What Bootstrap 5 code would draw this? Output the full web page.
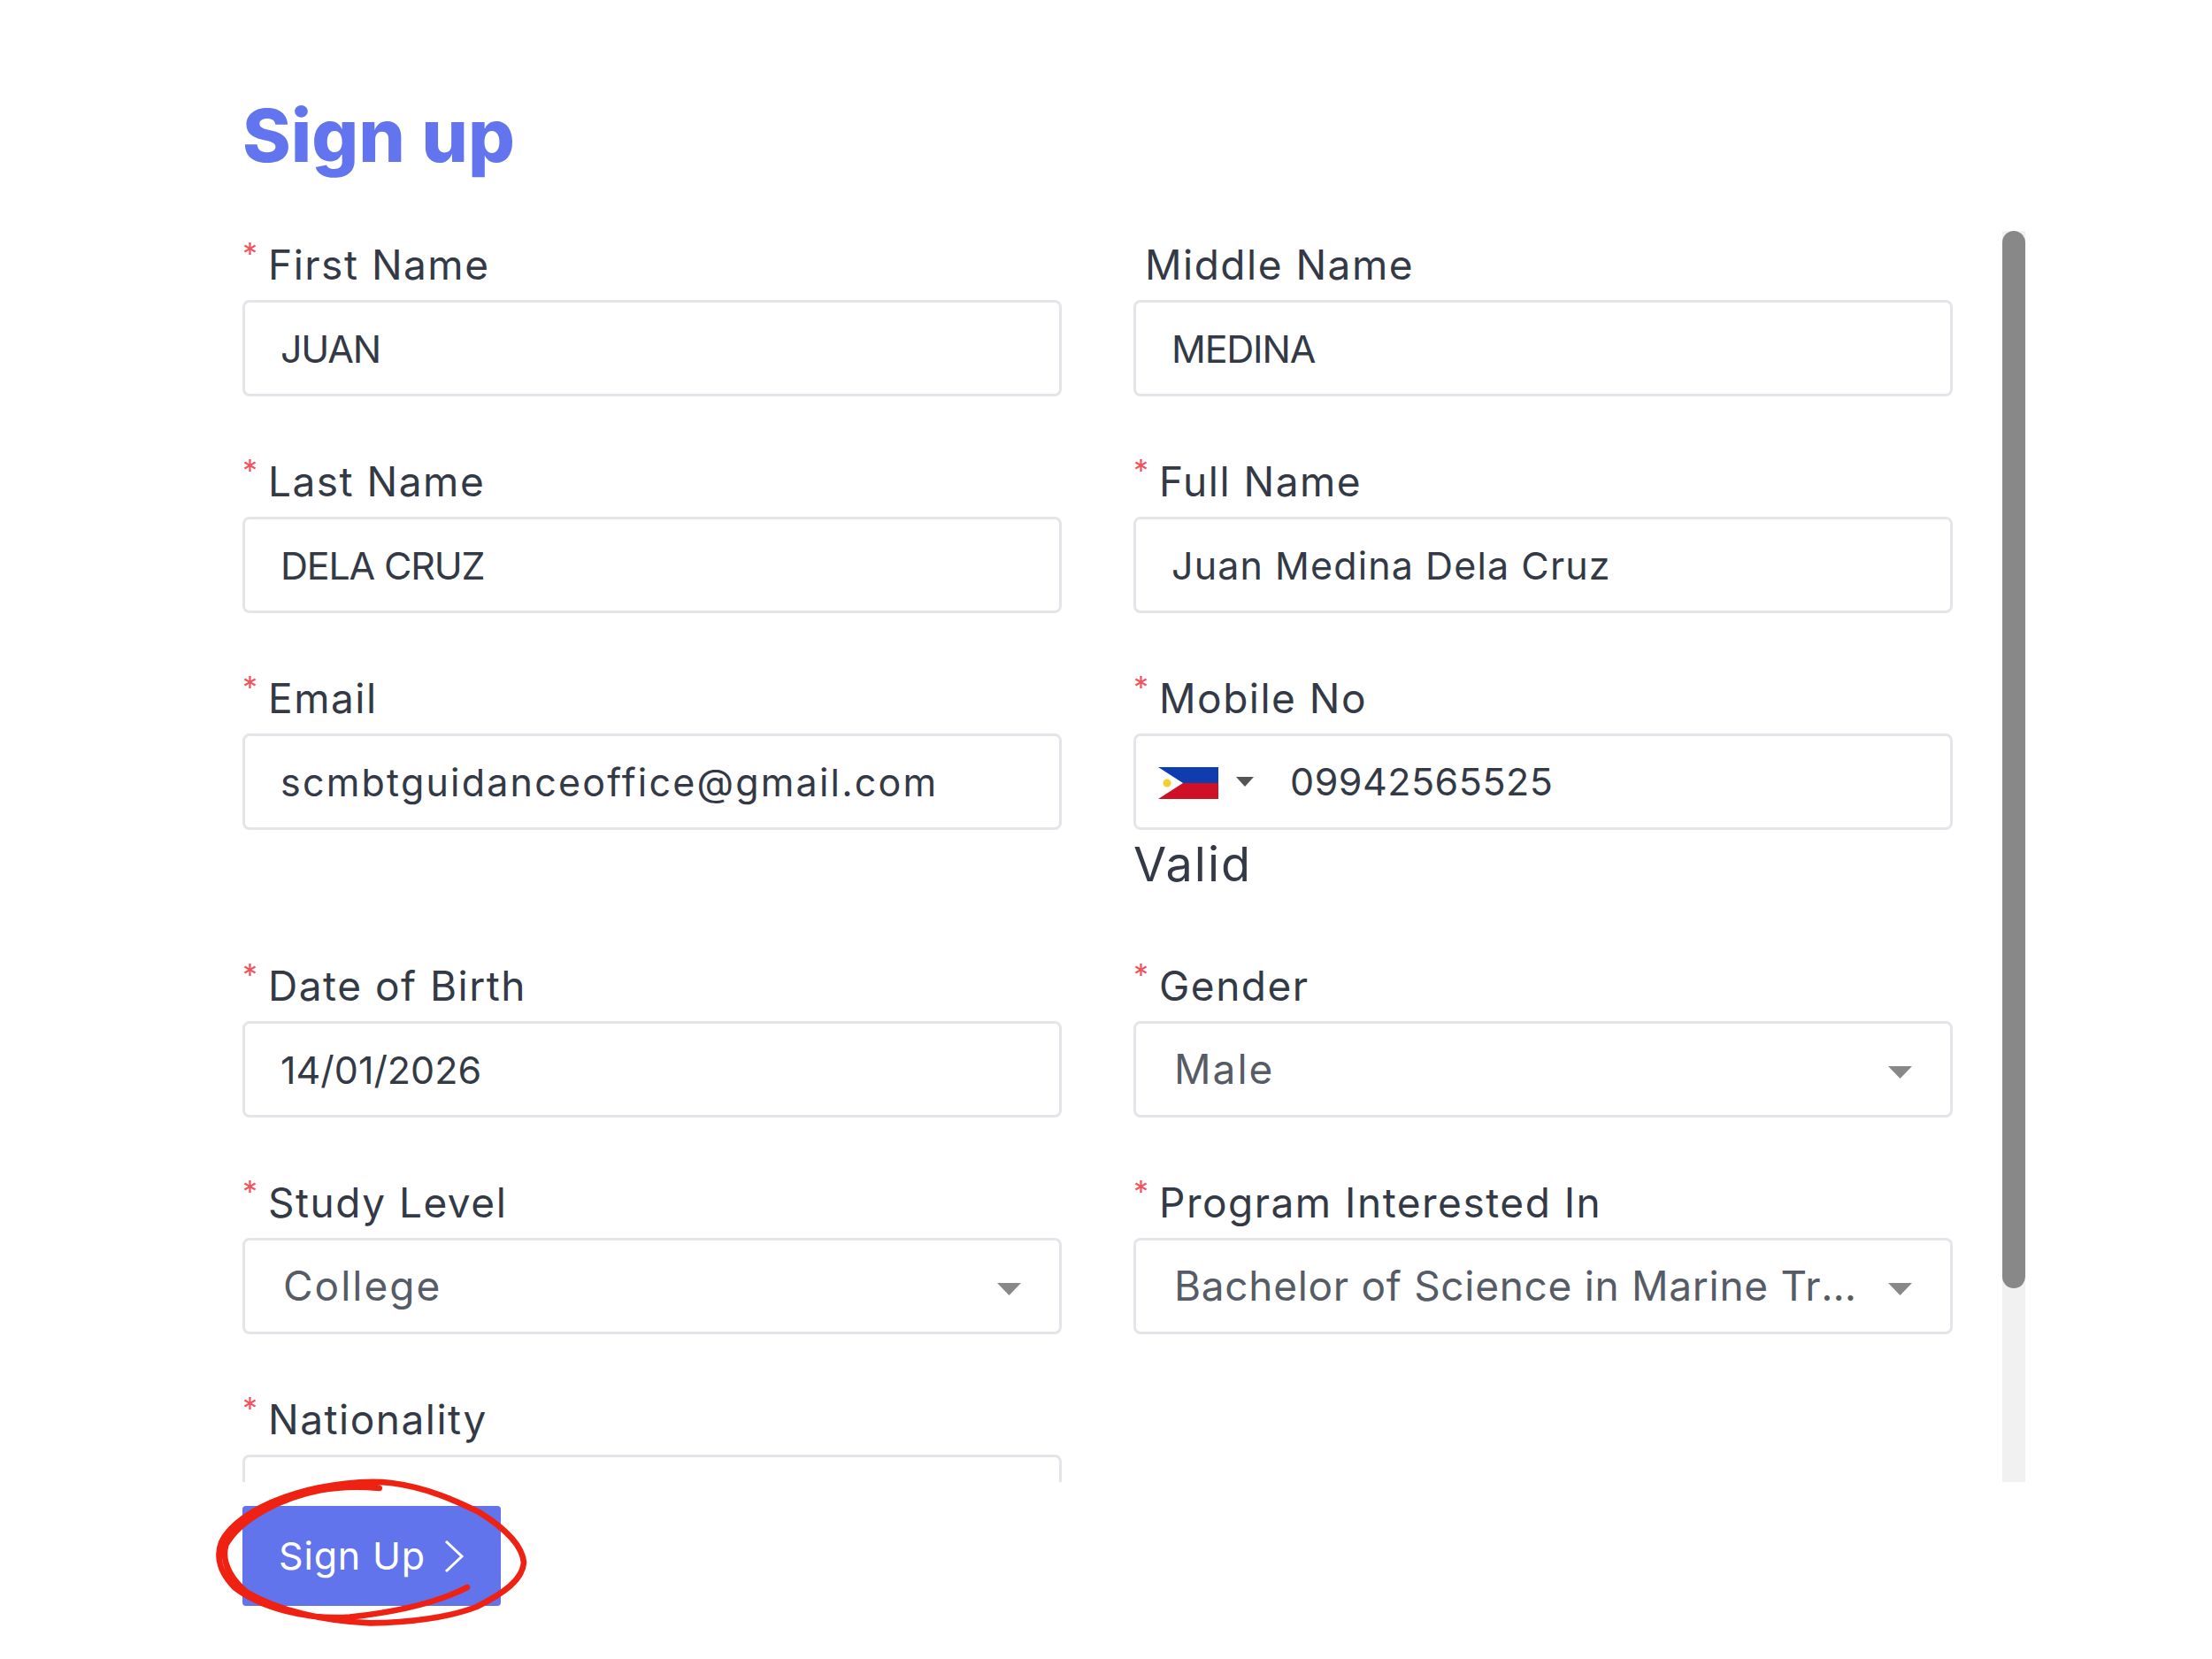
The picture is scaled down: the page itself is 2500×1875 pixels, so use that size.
<!doctype html>
<html lang="en">
<head>
<meta charset="utf-8">
<title>Sign up</title>
<link rel="stylesheet" href="https://cdn.jsdelivr.net/npm/bootstrap@5.3.0/dist/css/bootstrap.min.css">
<style>
body{background:#fff;font-family:Inter,"Liberation Sans",sans-serif;color:#333a46}
.page-wrap{padding:98px 0 0 274px;min-height:1875px}
.page-title{font-size:83px;line-height:110px;font-weight:800;color:#6274ee;margin:0 0 53px;letter-spacing:0}
.scroll-frame{width:2015px;gap:56px}
.scroll-area{width:1933px;height:1414px;overflow:hidden;flex:none}
.track{width:26px;flex:none;background:#f1f1f1}
.thumb{height:1195px;background:#888;border-radius:13px}
.form-grid{--bs-gutter-x:81px;--bs-gutter-y:0}
.field{height:245px}
.field-tall{height:325px}
.field-label{display:flex;height:78px;align-items:center;font-size:46px;letter-spacing:1.5px;line-height:1;margin:0;color:#333a46;padding-bottom:3px}
.field-label.plain{padding-left:13px}
.req{width:29px;flex:none;color:#f0545f;font-size:34px;line-height:1;align-self:flex-start;letter-spacing:0;padding-top:9px}
.field .form-control{height:109px;border:3px solid #e3e5e9;border-radius:8px;padding:0 40px;font-size:43px;color:#333a46;box-shadow:none}
.field .ls-caps{letter-spacing:-1.2px}
.field .ls-mixed{letter-spacing:1.1px}
.field .ls-email{letter-spacing:2.2px}
.sel .sel-text{flex:1;min-width:0;padding-left:3px;font-size:46px;letter-spacing:2px;color:#565c66}
.sel .ls-long{letter-spacing:.7px}
.sel svg{flex:none;margin-left:34px;margin-right:3px;margin-top:6px;width:27px;height:14px}
.field .tel{padding-left:25px}
.tel .flag{width:68px;height:36px;flex:none;margin-top:2px}
.tel .caret-tel{width:20px;height:11px;flex:none;margin:0 41px 0 20px}
.tel .tel-num{letter-spacing:.5px}
.valid-text{font-size:54px;letter-spacing:2px;line-height:78px;color:#333a46;margin:0}
.action-wrap{margin-top:27px;width:292px}
.signup-btn{width:292px;height:113px;background:#6274ec;border:0;border-radius:4px;color:#fff;font-size:43px;letter-spacing:.8px;padding:0;gap:20px}
.signup-btn svg{width:24px;height:38px}
.scribble{position:absolute;left:-52px;top:-146px;width:420px;height:315px;pointer-events:none}
</style>
</head>
<body>
<main class="page-wrap">
  <h1 class="page-title">Sign up</h1>
  <div class="scroll-frame d-flex">
    <div class="scroll-area">
      <form>
        <div class="row form-grid">
          <div class="col-6 field"><label class="field-label"><span class="req">*</span>First Name</label><input class="form-control ls-caps" value="JUAN"></div>
          <div class="col-6 field"><label class="field-label plain">Middle Name</label><input class="form-control ls-caps" value="MEDINA"></div>
          <div class="col-6 field"><label class="field-label"><span class="req">*</span>Last Name</label><input class="form-control ls-caps" value="DELA CRUZ"></div>
          <div class="col-6 field"><label class="field-label"><span class="req">*</span>Full Name</label><input class="form-control ls-mixed" value="Juan Medina Dela Cruz"></div>
          <div class="col-6 field field-tall"><label class="field-label"><span class="req">*</span>Email</label><input class="form-control ls-email" value="scmbtguidanceoffice@gmail.com"></div>
          <div class="col-6 field field-tall"><label class="field-label"><span class="req">*</span>Mobile No</label>
            <div class="form-control tel d-flex align-items-center">
              <svg class="flag" viewBox="0 0 68 36"><rect width="68" height="18" fill="#0f3cae"/><rect y="18" width="68" height="18" fill="#ce1126"/><path d="M0 0 28 18 0 36Z" fill="#fff"/><circle cx="10" cy="18" r="4.5" fill="#f4cf2e"/></svg>
              <svg class="caret-tel" viewBox="0 0 20 11"><path d="M0 0H20L10 11Z" fill="#555"/></svg>
              <span class="tel-num">09942565525</span>
            </div>
            <p class="valid-text">Valid</p>
          </div>
          <div class="col-6 field"><label class="field-label"><span class="req">*</span>Date of Birth</label><input class="form-control" value="14/01/2026"></div>
          <div class="col-6 field"><label class="field-label"><span class="req">*</span>Gender</label>
            <div class="form-control sel d-flex align-items-center"><span class="sel-text text-truncate">Male</span><svg viewBox="0 0 27 14"><path d="M0 0H27L13.5 14Z" fill="#888"/></svg></div></div>
          <div class="col-6 field"><label class="field-label"><span class="req">*</span>Study Level</label>
            <div class="form-control sel d-flex align-items-center"><span class="sel-text text-truncate">College</span><svg viewBox="0 0 27 14"><path d="M0 0H27L13.5 14Z" fill="#888"/></svg></div></div>
          <div class="col-6 field"><label class="field-label"><span class="req">*</span>Program Interested In</label>
            <div class="form-control sel d-flex align-items-center"><span class="sel-text ls-long text-truncate">Bachelor of Science in Marine Transportation</span><svg viewBox="0 0 27 14"><path d="M0 0H27L13.5 14Z" fill="#888"/></svg></div></div>
          <div class="col-6 field"><label class="field-label"><span class="req">*</span>Nationality</label><input class="form-control" value=""></div>
        </div>
      </form>
    </div>
    <div class="track"><div class="thumb"></div></div>
  </div>
  <div class="action-wrap position-relative">
    <button type="button" class="btn signup-btn d-flex align-items-center justify-content-center">Sign Up
      <svg viewBox="0 0 24 38"><path d="M3 2 21 19 3 36" fill="none" stroke="#fff" stroke-width="3"/></svg>
    </button>
    <svg class="scribble" viewBox="0 0 1260 945"><path d="M918 714C830 760 700 795 520 815C380 825 220 785 130 715C80 665 65 610 85 560C120 490 220 430 340 395C440 365 570 350 660 360C780 375 880 420 960 460C1040 510 1105 570 1110 630C1105 690 1040 735 950 780C860 815 720 835 590 835C440 830 280 795 170 730C110 680 85 620 100 570C150 480 290 410 420 385C500 370 560 372 620 378" fill="none" stroke="#ee2112" stroke-width="20" stroke-linecap="round"/></svg>
  </div>
</main>
</body>
</html>
